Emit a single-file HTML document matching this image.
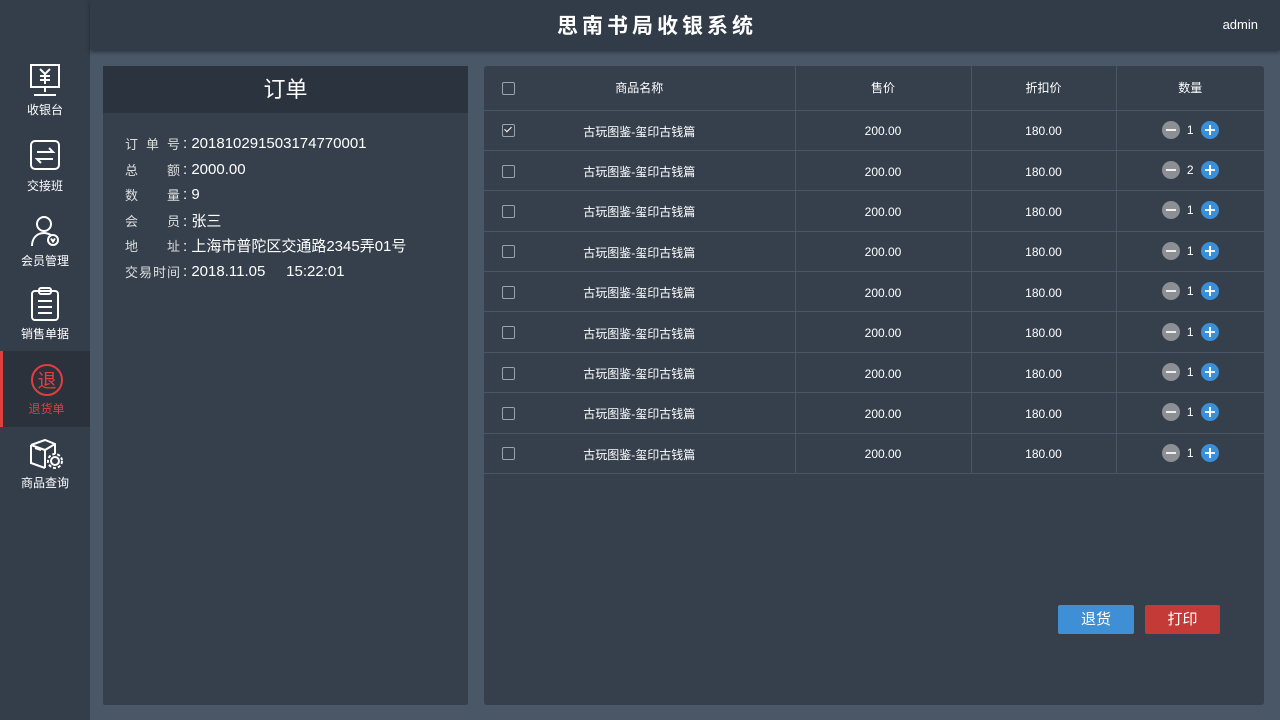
<!DOCTYPE html>
<html><head><meta charset="utf-8"><style>
*{margin:0;padding:0;box-sizing:border-box}
body{width:1280px;height:720px;background:#495767;font-family:"Liberation Sans","Noto Sans CJK SC",sans-serif;color:#fff;position:relative;overflow:hidden}
.side{position:absolute;left:0;top:0;width:90px;height:720px;background:#343d4a}
.head{position:absolute;left:90px;top:0;width:1190px;height:50px;background:#323b48;box-shadow:0 2px 4px rgba(0,0,0,.4)}
.head .t{position:absolute;left:467px;width:200px;top:10px;text-align:center;font-size:21px;letter-spacing:4px;font-weight:bold}
.head .a{position:absolute;right:22px;top:17px;font-size:13px}
.nav{position:absolute;left:0;width:90px;height:76px;text-align:center;font-size:12px}
.nav svg{display:block;margin:0 auto}
.nav span{display:block;margin-top:3px}
.nav.act{background:#2b323c;border-left:3px solid #e0403c;color:#e0403c}
.lp{position:absolute;left:103px;top:66px;width:365px;height:639px;background:#36404d;border-radius:2px}
.lp .h{height:47px;background:#2b333e;text-align:center;font-size:22px;line-height:47px}
.info{padding:18px 0 0 22px;font-size:15px}
.info div{height:25.5px;display:flex;align-items:center}
.info b{font-weight:normal;font-size:13px;color:#ddd;display:inline-block;width:55px;text-align-last:justify;margin-right:3px}
.rp{position:absolute;left:484px;top:66px;width:780px;height:639px;background:#36404d;border-radius:3px}
table{border-collapse:collapse;width:780px;font-size:12px}
td{border-bottom:1px solid #4a5665;text-align:center;height:40.4px;border-right:1px solid #4a5665;padding-top:2px}
td:last-child{border-right:none}
td:first-child{position:relative}
tr:first-child td{height:44px;padding-top:0}
.cb{position:absolute;left:18px;top:50%;margin-top:-6px;width:13px;height:13px;border:1.5px solid #9aa3ad;border-radius:2px}
.cb.c::after{content:"";position:absolute;left:3px;top:0px;width:3px;height:6px;border:solid #fff;border-width:0 1.5px 1.5px 0;transform:rotate(45deg)}
.q{display:inline-flex;align-items:center;gap:7px}
.m,.p{width:18px;height:18px;border-radius:50%;position:relative}
.m{background:#8c8f93}.p{background:#3a8fd9}
.m::before,.p::before{content:"";position:absolute;left:4px;top:8px;width:10px;height:2px;background:#eee}
.p::after{content:"";position:absolute;left:8px;top:4px;width:2px;height:10px;background:#fff}
.btn{position:absolute;top:605px;width:76px;height:29px;border-radius:2px;text-align:center;line-height:29px;font-size:15px}
</style></head><body>
<div class="side">
 <div class="nav" style="top:62px"><svg width="34" height="36" viewBox="0 0 34 36" fill="none" stroke="#fff" stroke-width="2"><rect x="3" y="3" width="28" height="22"/><path d="M17 25v5M6 33h22M12 7l5 5 5-5M17 12v10M12 14h10M12 18h10"/></svg><span>收银台</span></div>
 <div class="nav" style="top:138px"><svg width="34" height="36" viewBox="0 0 34 36" fill="none" stroke="#fff" stroke-width="2"><rect x="3" y="3" width="28" height="28" rx="4"/><path d="M9 14h16l-4-4M25 21H9l4 4"/></svg><span>交接班</span></div>
 <div class="nav" style="top:213px"><svg width="34" height="36" viewBox="0 0 34 36" fill="none" stroke="#fff" stroke-width="2"><circle cx="16" cy="11" r="7"/><path d="M4 33c0-8 5-13 12-13 3 0 5 1 7 2"/><circle cx="25" cy="27" r="5"/><path d="M23 25.5l2 3 2-3"/></svg><span>会员管理</span></div>
 <div class="nav" style="top:286px"><svg width="34" height="36" viewBox="0 0 34 36" fill="none" stroke="#fff" stroke-width="2"><rect x="4" y="5" width="26" height="29" rx="3"/><rect x="11" y="2" width="12" height="6" rx="2"/><path d="M10 15h14M10 21h14M10 27h14"/></svg><span>销售单据</span></div>
 <div class="nav act" style="top:351px;padding-top:12px"><svg width="34" height="34" viewBox="0 0 34 34"><circle cx="17" cy="17" r="15" fill="none" stroke="#e0403c" stroke-width="2"/><text x="17" y="24" text-anchor="middle" font-size="19" fill="#e0403c" font-family="Noto Sans CJK SC">退</text></svg><span>退货单</span></div>
 <div class="nav" style="top:437px"><svg width="36" height="34" viewBox="0 0 36 34" fill="none" stroke="#fff" stroke-width="2"><path d="M4 8l14-5 10 4v10M4 8v18l14 5M4 8l14 5v18M18 13l10-6M8 11l6 2"/><circle cx="28" cy="24" r="4"/><circle cx="28" cy="24" r="7" stroke-dasharray="3 2"/></svg><span>商品查询</span></div>
</div>
<div class="head"><div class="t">思南书局收银系统</div><div class="a">admin</div></div>
<div class="lp"><div class="h">订单</div>
<div class="info">
<div><b>订 单 号</b>: 201810291503174770001</div>
<div><b>总 额</b>: 2000.00</div>
<div><b>数 量</b>: 9</div>
<div><b>会 员</b>: 张三</div>
<div><b>地 址</b>: 上海市普陀区交通路2345弄01号</div>
<div><b>交易时间</b>: 2018.11.05&nbsp;&nbsp;&nbsp;&nbsp;&nbsp;15:22:01</div>
</div></div>
<div class="rp"><table>
<tr><td style="width:311px"><span class="cb"></span>商品名称</td><td style="width:176px">售价</td><td style="width:145px">折扣价</td><td>数量</td></tr>
<tr><td><span class="cb c"></span>古玩图鉴-玺印古钱篇</td><td>200.00</td><td>180.00</td><td><span class="q"><i class="m"></i>1<i class="p"></i></span></td></tr>
<tr><td><span class="cb"></span>古玩图鉴-玺印古钱篇</td><td>200.00</td><td>180.00</td><td><span class="q"><i class="m"></i>2<i class="p"></i></span></td></tr>
<tr><td><span class="cb"></span>古玩图鉴-玺印古钱篇</td><td>200.00</td><td>180.00</td><td><span class="q"><i class="m"></i>1<i class="p"></i></span></td></tr>
<tr><td><span class="cb"></span>古玩图鉴-玺印古钱篇</td><td>200.00</td><td>180.00</td><td><span class="q"><i class="m"></i>1<i class="p"></i></span></td></tr>
<tr><td><span class="cb"></span>古玩图鉴-玺印古钱篇</td><td>200.00</td><td>180.00</td><td><span class="q"><i class="m"></i>1<i class="p"></i></span></td></tr>
<tr><td><span class="cb"></span>古玩图鉴-玺印古钱篇</td><td>200.00</td><td>180.00</td><td><span class="q"><i class="m"></i>1<i class="p"></i></span></td></tr>
<tr><td><span class="cb"></span>古玩图鉴-玺印古钱篇</td><td>200.00</td><td>180.00</td><td><span class="q"><i class="m"></i>1<i class="p"></i></span></td></tr>
<tr><td><span class="cb"></span>古玩图鉴-玺印古钱篇</td><td>200.00</td><td>180.00</td><td><span class="q"><i class="m"></i>1<i class="p"></i></span></td></tr>
<tr><td><span class="cb"></span>古玩图鉴-玺印古钱篇</td><td>200.00</td><td>180.00</td><td><span class="q"><i class="m"></i>1<i class="p"></i></span></td></tr>
</table></div>
<div class="btn" style="left:1058px;background:#3f8fd6">退货</div>
<div class="btn" style="left:1145px;background:#c33a36;width:75px">打印</div>
</body></html>
